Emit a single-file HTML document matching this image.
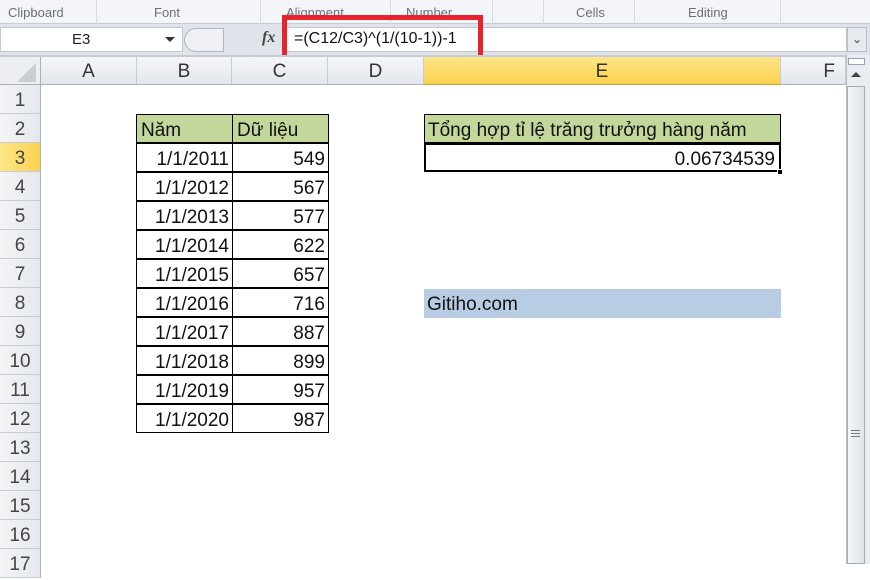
<!DOCTYPE html>
<html><head><meta charset="utf-8"><style>
*{margin:0;padding:0;box-sizing:border-box}
body{width:870px;height:564px;overflow:hidden;background:#fff;font-family:"Liberation Sans",sans-serif;position:relative}
.abs{position:absolute}
.rib{left:0;top:0;width:870px;height:24px;background:#f3f5f8;border-bottom:1px solid #c5ccd6}
.rl{top:5px;font-size:13px;color:#6a6f78}
.sep{top:0;width:1px;height:24px;background:#d6dbe2}
.fb{left:0;top:24px;width:870px;height:31px;background:#dfe4ea}
.ch{top:57px;height:28px;background:linear-gradient(#f5f6f8,#e2e6eb);border-right:1px solid #c5ccd6;border-bottom:1px solid #a9b1bc;font-size:19px;color:#333;text-align:center;line-height:30px}
.rh{left:0;width:41px;height:29px;background:linear-gradient(90deg,#f3f4f6,#e4e8ed);border-bottom:1px solid #c5ccd6;border-right:1px solid #a9b1bc;font-size:19px;color:#444;text-align:center;line-height:31px}
.c{font-size:19px;color:#111;line-height:31px;height:29px;white-space:nowrap;border:1px solid #000;overflow:hidden}
</style></head><body>
<div class="abs rib"></div>
<div class="abs rl" style="left:8px">Clipboard</div>
<div class="abs rl" style="left:154px">Font</div>
<div class="abs rl" style="left:286px">Alignment</div>
<div class="abs rl" style="left:406px">Number</div>
<div class="abs rl" style="left:576px">Cells</div>
<div class="abs rl" style="left:688px">Editing</div>
<div class="abs sep" style="left:96px"></div><div class="abs sep" style="left:260px"></div><div class="abs sep" style="left:390px"></div><div class="abs sep" style="left:492px"></div><div class="abs sep" style="left:543px"></div><div class="abs sep" style="left:634px"></div><div class="abs sep" style="left:780px"></div>
<div class="abs fb"></div>
<div class="abs" style="left:0;top:27px;width:183px;height:25px;background:#fff;border:1px solid #c0c7d0"></div>
<div class="abs" style="left:72px;top:31px;font-size:15px;color:#222">E3</div>
<div class="abs" style="left:165px;top:37px;width:0;height:0;border-left:5px solid transparent;border-right:5px solid transparent;border-top:5px solid #333"></div>
<div class="abs" style="left:184px;top:28px;width:40px;height:24px;border:1px solid #b0b6bf;border-radius:12px 0 0 12px;background:#eef0f3"></div>
<div class="abs" style="left:262px;top:29px;font-size:16px;font-style:italic;font-weight:bold;font-family:'Liberation Serif',serif;color:#444">fx</div>
<div class="abs" style="left:286px;top:27px;width:561px;height:25px;background:#fff;border:1px solid #c0c7d0"></div>
<div class="abs" style="left:294px;top:30px;font-size:16px;color:#111">=(C12/C3)^(1/(10-1))-1</div>
<div class="abs" style="left:282px;top:15px;width:201px;height:48px;border:5px solid #e8232c"></div>
<div class="abs" style="left:847px;top:27px;width:20px;height:25px;background:#e6e9ee;border:1px solid #b5bcc6;font-size:12px;text-align:center;line-height:22px;color:#444">⌄</div>
<div class="abs" style="left:0;top:55px;width:846px;height:2px;background:#c5ccd6"></div>
<div class="abs" style="left:0;top:57px;width:41px;height:28px;background:#eceef1;border-right:1px solid #a9b1bc;border-bottom:1px solid #a9b1bc"></div>
<div class="abs" style="left:17px;top:63px;width:0;height:0;border-left:19px solid transparent;border-bottom:19px solid #c9ced5"></div>
<div class="abs ch" style="left:41px;width:96px">A</div>
<div class="abs ch" style="left:137px;width:95px">B</div>
<div class="abs ch" style="left:232px;width:96px">C</div>
<div class="abs ch" style="left:328px;width:96px">D</div>
<div class="abs ch" style="left:424px;width:357px;background:linear-gradient(#fde58a,#fbd24e);border-bottom-color:#c9a13d">E</div>
<div class="abs ch" style="left:781px;width:65px;text-align:right;padding-right:10px">F</div>
<div class="abs" style="left:846px;top:55px;width:24px;height:509px;background:#e9ecf0;border-left:1px solid #b7bec8"></div>
<div class="abs" style="left:848px;top:58px;width:17px;height:7px;background:#fff;border:1px solid #9aa3ad"></div>
<div class="abs" style="left:851px;top:72px;width:0;height:0;border-left:5px solid transparent;border-right:5px solid transparent;border-bottom:5px solid #444"></div>
<div class="abs" style="left:847px;top:86px;width:18px;height:478px;background:linear-gradient(90deg,#f4f5f7,#dfe3e8);border:1px solid #a4abb5"></div>
<div class="abs" style="left:851px;top:430px;width:9px;height:7px;border-top:1px solid #777;border-bottom:1px solid #777"><div style="margin-top:2px;border-top:1px solid #777"></div></div>
<div class="abs rh" style="top:85px">1</div>
<div class="abs rh" style="top:114px">2</div>
<div class="abs rh" style="top:143px;background:linear-gradient(90deg,#fde58a,#fbd24e)">3</div>
<div class="abs rh" style="top:172px">4</div>
<div class="abs rh" style="top:201px">5</div>
<div class="abs rh" style="top:230px">6</div>
<div class="abs rh" style="top:259px">7</div>
<div class="abs rh" style="top:288px">8</div>
<div class="abs rh" style="top:317px">9</div>
<div class="abs rh" style="top:346px">10</div>
<div class="abs rh" style="top:375px">11</div>
<div class="abs rh" style="top:404px">12</div>
<div class="abs rh" style="top:433px">13</div>
<div class="abs rh" style="top:462px">14</div>
<div class="abs rh" style="top:491px">15</div>
<div class="abs rh" style="top:520px">16</div>
<div class="abs rh" style="top:549px">17</div>

<div class="abs c" style="left:136px;top:114px;width:97px;background:#c4d79b;padding-left:4px">Năm</div>
<div class="abs c" style="left:232px;top:114px;width:97px;background:#c4d79b;padding-left:4px">Dữ liệu</div>
<div class="abs c" style="left:136px;top:143px;width:97px;text-align:right;padding-right:3px">1/1/2011</div><div class="abs c" style="left:232px;top:143px;width:97px;text-align:right;padding-right:3px">549</div>
<div class="abs c" style="left:136px;top:172px;width:97px;text-align:right;padding-right:3px">1/1/2012</div><div class="abs c" style="left:232px;top:172px;width:97px;text-align:right;padding-right:3px">567</div>
<div class="abs c" style="left:136px;top:201px;width:97px;text-align:right;padding-right:3px">1/1/2013</div><div class="abs c" style="left:232px;top:201px;width:97px;text-align:right;padding-right:3px">577</div>
<div class="abs c" style="left:136px;top:230px;width:97px;text-align:right;padding-right:3px">1/1/2014</div><div class="abs c" style="left:232px;top:230px;width:97px;text-align:right;padding-right:3px">622</div>
<div class="abs c" style="left:136px;top:259px;width:97px;text-align:right;padding-right:3px">1/1/2015</div><div class="abs c" style="left:232px;top:259px;width:97px;text-align:right;padding-right:3px">657</div>
<div class="abs c" style="left:136px;top:288px;width:97px;text-align:right;padding-right:3px">1/1/2016</div><div class="abs c" style="left:232px;top:288px;width:97px;text-align:right;padding-right:3px">716</div>
<div class="abs c" style="left:136px;top:317px;width:97px;text-align:right;padding-right:3px">1/1/2017</div><div class="abs c" style="left:232px;top:317px;width:97px;text-align:right;padding-right:3px">887</div>
<div class="abs c" style="left:136px;top:346px;width:97px;text-align:right;padding-right:3px">1/1/2018</div><div class="abs c" style="left:232px;top:346px;width:97px;text-align:right;padding-right:3px">899</div>
<div class="abs c" style="left:136px;top:375px;width:97px;text-align:right;padding-right:3px">1/1/2019</div><div class="abs c" style="left:232px;top:375px;width:97px;text-align:right;padding-right:3px">957</div>
<div class="abs c" style="left:136px;top:404px;width:97px;text-align:right;padding-right:3px">1/1/2020</div><div class="abs c" style="left:232px;top:404px;width:97px;text-align:right;padding-right:3px">987</div>

<div class="abs c" style="left:424px;top:114px;width:357px;background:#c4d79b;padding-left:3px">Tổng hợp tỉ lệ trăng trưởng hàng năm</div>
<div class="abs c" style="left:424px;top:143px;width:357px;text-align:right;padding-right:4px;border:2px solid #000;line-height:29px">0.06734539</div>
<div class="abs" style="left:777px;top:169px;width:6px;height:6px;background:#000;border:1px solid #fff"></div>
<div class="abs" style="left:424px;top:289px;width:357px;height:29px;background:#b8cce4;font-size:19px;line-height:31px;padding-left:3px;color:#111">Gitiho.com</div>
</body></html>
